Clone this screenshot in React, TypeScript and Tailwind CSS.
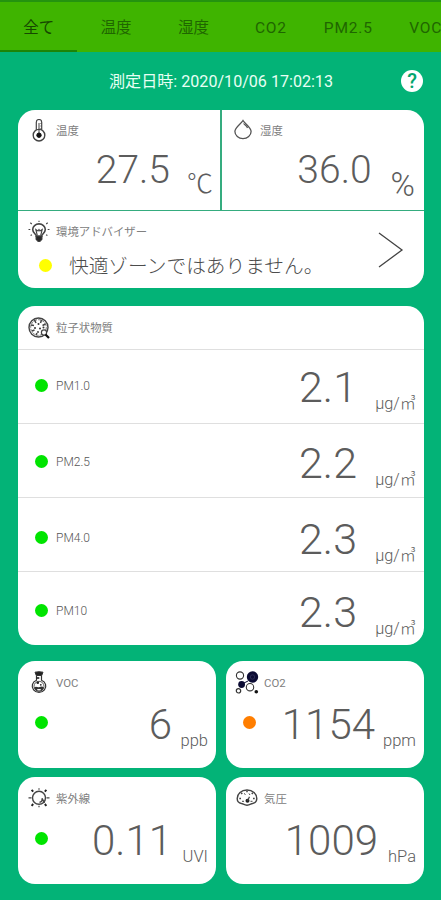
import { ReactNode, useState } from "react";
import clsx from "clsx";

const tabs = ["全て", "温度", "湿度", "CO2", "PM2.5", "VOC"];

const particles = [
  { name: "PM1.0", value: "2.1", height: "h-[74px]", pad: "pt-[15px]" },
  { name: "PM2.5", value: "2.2", height: "h-[74px]", pad: "pt-[17px]" },
  { name: "PM4.0", value: "2.3", height: "h-[74px]", pad: "pt-[19px]" },
  { name: "PM10", value: "2.3", height: "h-[73px]", pad: "pt-[18px]" },
];

const ThermometerIcon = () => (
  <svg viewBox="0 0 24 24" className="h-6 w-6" fill="none" stroke="#444">
    <path d="M9.3 11V3.200a2.700 2.700 0 0 1 5.400 0V11" strokeWidth="1.200" />
    <path d="M12 4v12M13.500 4.500h1M13.500 7h1M13.500 9.500h1" strokeWidth="1" />
    <circle cx="12" cy="16.200" r="5.800" strokeWidth="1.400" />
    <circle cx="12" cy="16.200" r="2.200" fill="#111" stroke="#111" />
  </svg>
);

const DropIcon = () => (
  <svg viewBox="0 0 24 24" className="h-6 w-6" fill="none" stroke="#555">
    <path
      d="M12 1.500C10 5 3.900 8.500 3.900 12.500a8.100 7.100 0 0 0 16.200 0C20.100 8.500 14 5 12 1.500Z"
      strokeWidth="1.300"
    />
    <path d="M12.500 4.500c1 1.300 3.400 2.200 4 4.500" strokeWidth="1.200" />
  </svg>
);

const BulbIcon = () => (
  <svg viewBox="0 0 24 24" className="h-6 w-6" fill="none" stroke="#444">
    <path
      d="M9.300 16.200c0-2-3.600-3.200-3.600-6.700a6.300 5.600 0 0 1 12.600 0c0 3.500-3.600 4.700-3.600 6.700Z"
      strokeWidth="1.600"
    />
    <path
      d="M10.300 15.500 8.800 9.500l2.200 1.500 1-1.500 1 1.500 2.200-1.500-1.500 6"
      strokeWidth="1.100"
    />
    <path d="M9 16h6v3.300l-1.800 2.200h-2.400L9 19.300Z" fill="#2a2a2a" />
    <path
      d="M1.500 9.500h1.800M20.700 9.500h1.800M3.300 2.800 4.800 4M20.700 2.800 19.200 4M12 .8v1.300M3.600 15.500l1.300-.8M20.400 15.500l-1.300-.8"
      strokeWidth="1.100"
    />
  </svg>
);

const ParticleIcon = () => (
  <svg viewBox="0 0 24 24" className="h-6 w-6" fill="none" stroke="#444">
    <circle cx="11.500" cy="11.500" r="9.500" strokeWidth="1.400" />
    <circle cx="11.500" cy="11.500" r="7.800" strokeWidth=".7" strokeDasharray="3 1" />
    <path
      d="M7.500 4 9 7M14.500 4l-1 3M4 9l3 .5M18.500 8l-3 1.500M5 15l2.500-1M9 19l1-2"
      strokeWidth="1.500"
    />
    <g fill="#333" stroke="none">
      <circle cx="11.500" cy="8" r="1" />
      <circle cx="8" cy="12" r="1" />
      <circle cx="13" cy="12.500" r="1" />
      <circle cx="16.500" cy="11.500" r="1" />
      <circle cx="11" cy="16" r=".9" />
    </g>
    <circle cx="17" cy="16.500" r="2.600" fill="#fff" strokeWidth="1.200" />
    <path d="m18.500 18.500 3.500 3.500" stroke="#111" strokeWidth="2.200" />
  </svg>
);

const FlaskIcon = () => (
  <svg viewBox="0 0 24 24" className="h-6 w-6" fill="none" stroke="#333">
    <path d="M8 1.200q4-1 8 0L14.700 4.500H9.300Z" fill="#222" />
    <path d="M9.500 4.500v4.700a6.800 6.300 0 1 0 5 0V4.500" strokeWidth="1.200" />
    <path d="M9.700 7h2.600" stroke="#111" strokeWidth="1.500" />
    <circle cx="12" cy="15.300" r="5" strokeWidth=".8" />
    <path
      d="M7.200 16.500c2-1.800 3.200.2 4.800-.3s2.800-1.700 4.800.3c-.5 2.700-2.600 3.800-4.800 3.800s-4.100-1.100-4.800-3.800Z"
      fill="#333"
      stroke="none"
    />
    <circle cx="10.800" cy="11.800" r="1.300" fill="#222" stroke="none" />
    <circle cx="13.800" cy="13.800" r=".9" fill="#222" stroke="none" />
    <ellipse cx="12" cy="18.800" rx="2.200" ry=".8" fill="#fff" stroke="none" />
  </svg>
);

const MoleculeIcon = () => (
  <svg viewBox="0 0 24 24" className="h-6 w-6" fill="none" stroke="#333">
    <circle cx="5" cy="4.500" r="3.600" strokeWidth="1.100" />
    <circle cx="17.500" cy="6" r="5.700" fill="#0b0b33" stroke="none" />
    <circle cx="17.500" cy="6" r="2.200" stroke="#373762" strokeWidth=".7" />
    <circle cx="6.600" cy="13.500" r="3.400" fill="#0b0b33" stroke="none" />
    <path d="m9 12 4-2" stroke="#0b0b33" />
    <circle cx="15" cy="16.200" r="3.700" strokeWidth="1.100" />
    <circle cx="3.500" cy="19.800" r="2.200" strokeWidth="1.200" />
    <circle cx="21.300" cy="20.700" r="1.800" fill="#111" stroke="none" />
  </svg>
);

const SunIcon = () => (
  <svg viewBox="0 0 24 24" className="h-6 w-6" fill="none" stroke="#444">
    <circle cx="12" cy="10.800" r="6.500" strokeWidth="1.400" />
    <path
      d="M12 1.300v1.500M12 18.800v1.500M1.500 10.800h3M19.500 10.800h3"
      strokeWidth="1.200"
    />
    <path
      d="m4.600 2.800 1.600 1.800M19.400 2.800l-1.600 1.800M4.600 18.800 6.200 17M19.400 18.800 17.800 17"
      stroke="#222"
      strokeWidth="1.900"
    />
    <path d="M12.500 15.300c2 0 3-1.500 2.500-4l2.500 4.500" strokeWidth="1.400" />
  </svg>
);

const GaugeIcon = () => (
  <svg viewBox="0 0 24 24" className="h-6 w-6" fill="none" stroke="#444">
    <path
      d="M6.500 16.500C3.800 16 2.200 14.300 2.200 11.500 2.200 6.800 6.300 3 12 3s9.800 3.800 9.800 8.500c0 2.800-1.600 4.500-4.300 5-1.600 0-2.500 1.700-5.500 1.700s-3.900-1.700-5.500-1.700Z"
      strokeWidth="1.400"
    />
    <path
      d="M6 11.500H4.300M7.200 7l-1-1.200M12 5.200V3.800M16.800 7l1-1.200M18 11.500h1.700"
      strokeWidth="1.500"
    />
    <path d="m9 6.500 1.500 1M14 6.500l1 1.500M7 14.300h2M15.500 14.300h2" strokeWidth="1" />
    <circle cx="12.500" cy="13.800" r="2" fill="#222" stroke="none" />
    <path d="m12.500 13.800 2-4" strokeWidth="1.200" />
  </svg>
);

const CardHeader = ({ icon, title }: { icon: ReactNode; title: string }) => (
  <div className="flex h-6 items-center gap-[5px] text-[11.400px] text-[#808080]">
    {icon}
    <span className="pt-[2px] leading-none">{title}</span>
  </div>
);

const Dot = ({ className }: { className: string }) => (
  <span className={clsx("h-[13px] w-[13px] rounded-full", className)} />
);

type ReadingProps = {
  icon: ReactNode;
  title: string;
  value: string;
  unit: string;
  dot?: string;
  unitWidth: string;
};

const ReadingCard = ({ icon, title, value, unit, dot, unitWidth }: ReadingProps) => (
  <section className="h-[107px] w-[198px] rounded-[17px] bg-white pt-[10px] pr-[8px] pl-[9px]">
    <CardHeader icon={icon} title={title} />
    <div className="flex pt-[8px] pl-[8px]">
      {dot && <Dot className={clsx("mt-[13px]", dot)} />}
      <div className="flex flex-1 justify-end text-[#5c5c5c]">
        <span className="mt-px text-[42px] leading-none font-light">
          {value}
        </span>
        <span
          className={clsx(
            "mt-[30px] text-right text-[16.500px] leading-none font-light",
            unitWidth,
          )}
        >
          {unit}
        </span>
      </div>
    </div>
  </section>
);

const App = () => {
  const [active, setActive] = useState(0);

  return (
    <div className="h-[900px] w-[441px] overflow-hidden bg-[#03b377] font-['Roboto','Noto_Sans_CJK_JP',sans-serif]">
      <nav className="flex h-[52px] overflow-hidden border-t-2 border-[#24930f] bg-[#3fb400]">
        {tabs.map((tab, index) => (
          <button
            key={tab}
            onClick={() => setActive(index)}
            className={clsx(
              "flex w-[77.400px] shrink-0 items-center justify-center border-b-2 pt-[5px] text-[15.500px]",
              index < 3
                ? "font-normal"
                : "font-normal tracking-[0.800px]",
              index === active
                ? "border-[#1d8508] text-[#164800]"
                : "border-transparent text-[#1f6600]",
            )}
          >
            {tab}
          </button>
        ))}
      </nav>

      <div className="flex h-[58px] items-center justify-between pr-[18px] pl-[109px]">
        <span className="pt-[3px] text-[16.100px] text-[#e8fff4]">
          測定日時: 2020/10/06 17:02:13
        </span>
        <span className="flex h-[22px] w-[22px] items-center justify-center rounded-full bg-white text-[20px] leading-none font-medium text-[#03a56e]">
          ?
        </span>
      </div>

      <main className="flex flex-col px-[18px]">
        <div className="flex h-[178px] w-[406px] flex-col gap-px overflow-hidden rounded-[17px] bg-[#35ac7f]">
          <div className="flex h-[100px] gap-[2px]">
            <section className="w-[202px] bg-white pt-[9px] pl-[9px]">
              <CardHeader icon={<ThermometerIcon />} title="温度" />
              <div className="flex justify-end pt-[8px] pr-[7px] text-[#5c5c5c]">
                <span className="text-[39px] leading-none font-light">27.5</span>
                <span className="mt-[20px] ml-[17px] text-[26px] leading-none font-light">
                  ℃
                </span>
              </div>
            </section>
            <section className="w-[202px] bg-white pt-[9px] pl-[9px]">
              <CardHeader icon={<DropIcon />} title="湿度" />
              <div className="flex justify-end pt-[8px] pr-[9px] text-[#5c5c5c]">
                <span className="text-[39px] leading-none font-light">36.0</span>
                <span className="mt-[17px] ml-[19px] text-[33px] leading-none font-light">
                  %
                </span>
              </div>
            </section>
          </div>
          <section className="flex h-[77px] items-center justify-between bg-white pr-[20px] pl-[9px]">
            <div className="flex h-full flex-col pt-[9px]">
              <CardHeader icon={<BulbIcon />} title="環境アドバイザー" />
              <div className="flex items-center gap-[17px] pt-[10px] pl-[12px]">
                <Dot className="bg-[#ffff00]" />
                <span className="pt-[3px] text-[19.700px] leading-none font-light text-[#4c4c4c]">
                  快適ゾーンではありません。
                </span>
              </div>
            </div>
            <svg viewBox="0 0 26 36" className="h-9 w-[26px]" fill="none">
              <path d="M1 1 24 18 1 35" stroke="#444" strokeWidth="1.300" />
            </svg>
          </section>
        </div>

        <section className="mt-[18px] h-[339px] w-[406px] rounded-[17px] bg-white">
          <div className="h-[43px] pt-[10px] pl-[9px]">
            <CardHeader icon={<ParticleIcon />} title="粒子状物質" />
          </div>
          {particles.map(({ name, value, height, pad }) => (
            <div
              key={name}
              className={clsx(
                "flex items-start border-t border-[#dfdfdf] pr-[8px] pl-[17px]",
                height,
                pad,
              )}
            >
              <Dot className="mt-[14px] bg-[#00e400]" />
              <span className="mt-[15px] ml-[8px] text-[12px] leading-none font-light text-[#555]">
                {name}
              </span>
              <div className="flex flex-1 justify-end text-[#5c5c5c]">
                <span className="mt-px text-[43px] leading-none font-light">
                  {value}
                </span>
                <span className="mt-[31px] w-[59px] text-right text-[16.300px] leading-none font-light">
                  μg/㎥
                </span>
              </div>
            </div>
          ))}
        </section>

        <div className="mt-4 grid grid-cols-[198px_198px] gap-x-[10px] gap-y-[9px]">
          <ReadingCard
            icon={<FlaskIcon />}
            title="VOC"
            value="6"
            unit="ppb"
            dot="bg-[#00e400]"
            unitWidth="w-[36px]"
          />
          <ReadingCard
            icon={<MoleculeIcon />}
            title="CO2"
            value="1154"
            unit="ppm"
            dot="bg-[#ff7e00]"
            unitWidth="w-[41px]"
          />
          <ReadingCard
            icon={<SunIcon />}
            title="紫外線"
            value="0.11"
            unit="UVI"
            dot="bg-[#00e400]"
            unitWidth="w-[36px]"
          />
          <ReadingCard
            icon={<GaugeIcon />}
            title="気圧"
            value="1009"
            unit="hPa"
            unitWidth="w-[38px]"
          />
        </div>
      </main>
    </div>
  );
};

export default App;
